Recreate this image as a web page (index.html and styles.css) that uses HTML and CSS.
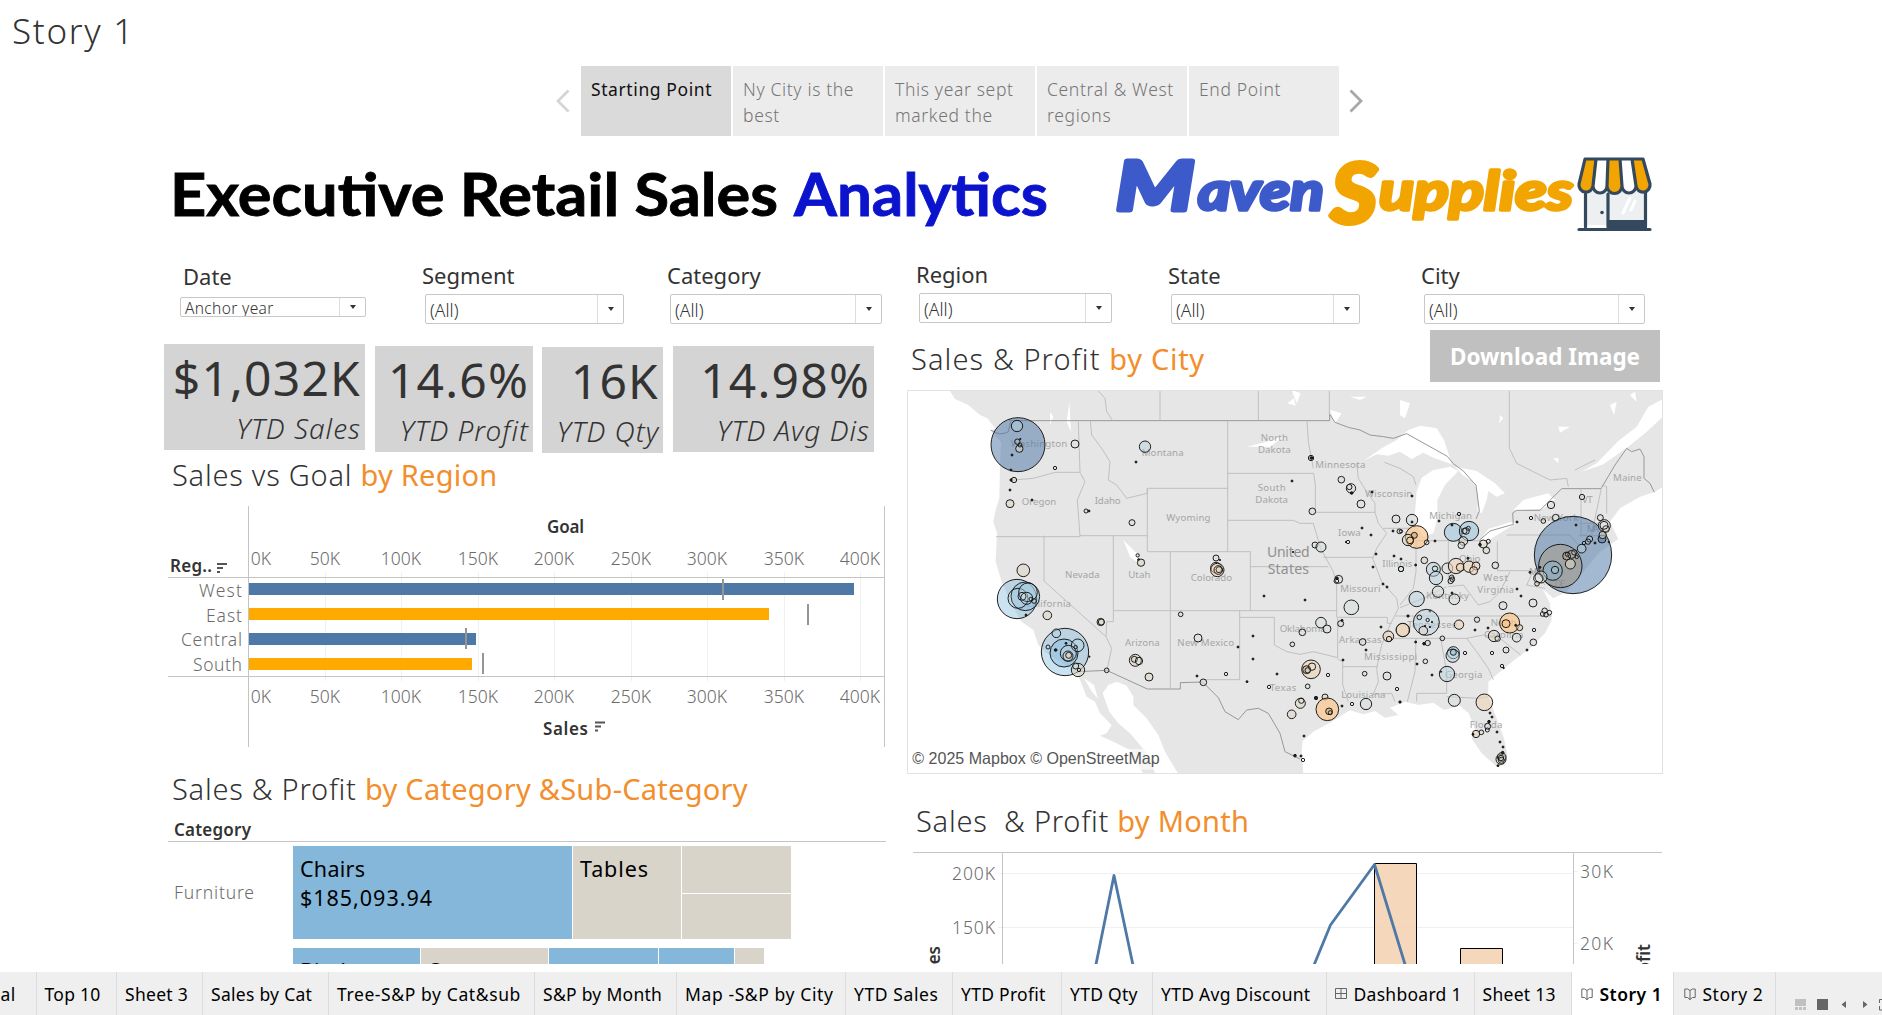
FILE: index.html
```html
<!DOCTYPE html>
<html lang="en">
<head>
<meta charset="utf-8">
<title>Story 1</title>
<link rel="stylesheet" href="styles.css">
</head>
<body>
<h1 class="story-title">Story 1</h1>
<nav class="story-nav">
  <svg class="chev" width="14" height="24" viewBox="0 0 14 24"><path d="M12.500 1.500 2 12l10.500 10.500"/></svg>
  <div class="points">
    <div class="point active">Starting Point</div>
    <div class="point">Ny City is the best</div>
    <div class="point">This year sept marked the</div>
    <div class="point">Central &amp; West regions</div>
    <div class="point">End Point</div>
  </div>
  <svg class="chev next" width="14" height="24" viewBox="0 0 14 24"><path d="M1.500 1.500 12 12 1.500 22.500"/></svg>
</nav>

<main class="dashboard">
  <header class="banner">
    <svg class="title" width="900" height="119" viewBox="164 136 900 119">
      <text x="170" y="216" textLength="608" lengthAdjust="spacingAndGlyphs">Executive Retail Sales</text>
      <text class="blue" x="794" y="216" textLength="254" lengthAdjust="spacingAndGlyphs">Analytics</text>
    </svg>
    <svg class="logo" width="560" height="119" viewBox="1100 136 560 119">
      <g class="brand maven">
        <text class="cap" x="1116" y="210" textLength="78" lengthAdjust="spacingAndGlyphs">M</text>
        <text x="1198" y="210" textLength="126" lengthAdjust="spacingAndGlyphs">aven</text>
      </g>
      <g class="brand supplies">
        <text class="cap big" x="1331" y="223" textLength="46" lengthAdjust="spacingAndGlyphs">S</text>
        <text x="1379" y="210" textLength="194" lengthAdjust="spacingAndGlyphs">upplies</text>
      </g>
      <path d="M1585 188h62v37h-62z" fill="#ecf0f1"/>
      <path d="M1608 220h39v8h-39z" fill="#34495e"/>
      <path d="M1585.500 194v33M1608 194v33M1645.500 188v38M1579 229.500h71" fill="none" stroke="#34495e" stroke-width="3.200" stroke-linecap="round"/>
      <circle cx="1602" cy="212.500" r="1.800" fill="#34495e"/>
      <path d="M1630 198l-7 15M1635 201l-4 9" stroke="#fff" stroke-width="3" stroke-linecap="round"/>
      <path d="M1585 159h58l7 25a6.500 6.500 0 0 1-14 2 7 7 0 0 1-14 0 7 7 0 0 1-15 0 7 7 0 0 1-14 0 6.500 6.500 0 0 1-14-2z" fill="#fff"/>
      <path d="M1585 159h11l-3 27a7 7 0 0 1-14-2zM1608 159h12l2 26a7 7 0 0 1-15 0zM1632 159h11l7 25a7 7 0 0 1-14 2z" fill="#f2a500"/>
      <path d="M1585 159h58l7 25a6.500 6.500 0 0 1-14 2 7 7 0 0 1-14 0 7 7 0 0 1-15 0 7 7 0 0 1-14 0 6.500 6.500 0 0 1-14-2zM1596 159l-3 27M1608 159l-1 27M1620 159l2 27M1632 159l4 27" fill="none" stroke="#34495e" stroke-width="3.200" stroke-linejoin="round"/>
    </svg>
  </header>

  <div class="columns">
    <section class="left">
      <div class="filters">
        <div class="filter date"><label>Date</label><div class="select small"><span>Anchor year</span><i></i></div></div>
        <div class="filter seg"><label>Segment</label><div class="select"><span>(All)</span><i></i></div></div>
        <div class="filter cat"><label>Category</label><div class="select"><span>(All)</span><i></i></div></div>
      </div>
      <div class="kpis">
        <div class="kpi k1"><b>$1,032K</b><em>YTD Sales</em></div>
        <div class="kpi k2"><b>14.6%</b><em>YTD Profit</em></div>
        <div class="kpi k3"><b>16K</b><em>YTD Qty</em></div>
        <div class="kpi k4"><b>14.98%</b><em>YTD Avg Dis</em></div>
      </div>
      <h2 class="h-region">Sales vs Goal <span>by Region</span></h2>
      <svg class="chart" width="723" height="260" viewBox="164 495 723 260">
        <path class="grid" d="M325.500 572v109M401.500 572v109M478.500 572v109M554.500 572v109M631.500 572v109M707.500 572v109M784.500 572v109M860.500 572v109"/>
        <g class="tick">
          <g id="axisTop" text-anchor="middle">
            <text x="261" y="565">0K</text><text x="325" y="565">50K</text><text x="401" y="565">100K</text><text x="478" y="565">150K</text><text x="554" y="565">200K</text><text x="631" y="565">250K</text><text x="707" y="565">300K</text><text x="784" y="565">350K</text><text x="860" y="565">400K</text>
          </g>
          <use href="#axisTop" y="138"/>
          <g text-anchor="end">
            <text x="242" y="597" textLength="43">West</text><text x="242" y="622" textLength="36">East</text><text x="242" y="646" textLength="61">Central</text><text x="242" y="671" textLength="49">South</text>
          </g>
        </g>
        <path class="axis" d="M248.500 506v241M884.500 506v241M168 577.500h717M168 676.500h717"/>
        <g fill="#4e79a7"><rect x="249" y="583" width="605" height="12"/><rect x="249" y="633" width="227" height="12"/></g>
        <g fill="#ffaa00"><rect x="249" y="608" width="520" height="12"/><rect x="249" y="658" width="223" height="12"/></g>
        <path d="M723 579v21M808 604v21M466 628v21M483 653v21" stroke="#959595" stroke-width="2"/>
        <g class="bold"><text x="547" y="533" textLength="37">Goal</text><text x="543" y="735" textLength="45">Sales</text><text x="170" y="572" textLength="42">Reg..</text></g>
        <path d="M217 564h10M217 568h6M217 572h3M595 722.500h10M595 726.500h6M595 730.500h3" stroke="#555" stroke-width="1.800"/>
      </svg>
      <h2 class="h-cat">Sales &amp; Profit <span>by Category &amp;Sub-Category</span></h2>
      <svg class="chart" width="723" height="154" viewBox="164 810 723 154">
        <g class="bold"><text x="174" y="836" textLength="77">Category</text></g>
        <path class="axis" d="M168 841.500h718"/>
        <g class="tick"><text x="174" y="899" textLength="80">Furniture</text></g>
        <g fill="#84b7d9"><path d="M293 846h279v93H293zM293 948h127v20H293zM549 948h109v20H549zM659 948h75v20h-75z"/></g>
        <g fill="#d8d4c9"><path d="M573 846h108v93H573zM682 846h109v47H682zM682 894h109v45H682zM421 948h127v20H421zM735 948h29v20h-29z"/></g>
        <g class="mark"><text x="300" y="877" textLength="65">Chairs</text><text x="300" y="906" textLength="132">$185,093.94</text><text x="580" y="877" textLength="68">Tables</text><text x="300" y="979">Binders</text><text x="429" y="979">Storage</text></g>
      </svg>
    </section>

    <section class="right">
      <div class="filters">
        <div class="filter reg"><label>Region</label><div class="select"><span>(All)</span><i></i></div></div>
        <div class="filter sta"><label>State</label><div class="select"><span>(All)</span><i></i></div></div>
        <div class="filter cit"><label>City</label><div class="select"><span>(All)</span><i></i></div></div>
      </div>
      <div class="map-head">
        <h2 class="h-city">Sales &amp; Profit <span>by City</span></h2>
        <button class="download">Download Image</button>
      </div>
      <svg class="map" width="756" height="384" viewBox="21 15 2268 1152">
        <rect x="21" y="15" width="2268" height="1152" fill="#e6e6e6"/>
        <!-- oceans -->
        <g fill="#fff">
          <path d="M21 15H148L165 42 205 60 240 90 262 100 285 130 272 137 303 172 300 240 298 340 288 370 280 410 291 445 287 530 305 590 335 660 365 710 400 735 415 780 435 800 480 830 510 850 535 872 560 935 585 950 600 985 635 1020 620 1045 600 1052 640 1070 690 1095 730 1167H21z"/>
          <path d="M608 925 625 900 650 890 680 902 700 935 700 960 740 1000 775 1050 795 1100 835 1167H765L752 1120 720 1080 690 1045 655 1015 628 980z"/>
          <path d="M552 880l30 20 12 42-22-28z"/>
          <path d="M1210 1167 1205 1100 1208 1068 1240 1040 1295 1010 1330 988 1350 976 1390 988 1425 978 1455 998 1495 990 1470 968 1515 950 1555 960 1600 953 1632 975 1680 962 1706 985 1728 1040 1715 1060 1745 1105 1790 1145 1812 1140 1822 1110 1812 1060 1790 1000 1765 935 1765 890 1800 860 1850 820 1890 790 1935 745 1955 705 1950 655 1928 612 1960 640 2000 620 2100 500 2155 462 2130 410 2160 370 2220 335 2265 320 2289 305V1167z"/>
          <path d="M2289 42 2245 65 2210 125 2155 168 2090 235 2045 260 2110 238 2185 185 2235 145 2289 95z"/>
        </g>
        <!-- lakes -->
        <g fill="#fff">
          <path d="M1390 228 1445 190 1490 165 1525 135 1560 122 1610 130 1632 165 1645 205 1655 238 1600 218 1570 203 1535 222 1500 200 1465 212 1430 208z"/>
          <path d="M1545 385 1550 320 1565 278 1600 255 1650 245 1675 258 1635 300 1612 345 1612 400 1600 445 1570 455 1548 420z"/>
          <path d="M1665 245 1730 258 1785 295 1815 325 1790 335 1765 318 1760 345 1745 385 1732 378 1735 330 1722 292 1690 272z"/>
          <path d="M1735 472 1765 432 1830 412 1850 414 1795 448 1745 480z"/>
          <path d="M1840 376 1870 345 1945 325 1965 345 1930 371z"/>
          <path d="M670 465l40 40 5 30-25-20zM1290 75l35 10-20 30zM500 110l8-60 5 90zM450 80l10 15-10 25zM1162 55l20-15 5 22zM1175 15l15 40 12-30zM1040 185l60-15 50-15-40 30zM2130 60l20-10-8 40zM2190 30l15-10 5 30zM1975 125l35 0-30 18zM1960 220l15 0 0 15zM1800 90l10 10-12 14zM1350 35l50 0-20 10zM1500 45l30 10-15 45-15-10z"/>
        </g>
        <!-- boundaries -->
        <g class="border">
          <path d="M328 107H1289V88L1305 112 1345 127 1380 135 1410 150 1450 155 1480 160 1520 146 1642 214 1660 236 1690 258 1720 292 1728 300 1738 378 1728 402M1738 466 1770 438 1840 418 1838 384 1850 376H1920L1985 311H2103L2145 240 2180 190 2195 200 2220 192 2232 215V280L2250 295 2263 322"/>
          <path d="M534 860 620 856 742 912H841V893L908 891 955 938 975 980 1015 1004 1040 975 1075 970 1105 985 1140 1045 1155 1100 1200 1122"/>
          <path d="M272 135Q300 155 325 140L332 110"/>
        </g>
        <g class="state">
          <path d="M780 15V107M1075 15V107M1288 15V88M595 18 615 40 620 80 638 107M1828 15V190L1850 235 1900 260 1950 285 2000 280 2005 305M2025 255l60-30"/>
          <path d="M340 285 400 280 465 262H540L535 110M540 262 555 290 532 345 540 455H288M432 452V588L618 755 620 710H640V452H540M571 107 575 150 605 190 630 230 625 285 650 300 680 340 742 325V310H983M742 310V500H1051M640 677H1309M811 500V912M618 755 635 790 620 860M742 452H640M983 107V499M983 406H1180L1200 415 1240 415 1262 490 1300 560 1310 600V697M1051 499V677M1051 545H1285M983 265H1241L1246 300V382H1425M1221 107 1225 170 1240 250M1019 677V884H910M1019 697H1123V780L1160 800 1200 808 1240 800 1313 818V697H1462V715H1475M1313 822 1328 830V845H1432M1328 845V900L1345 950M1425 382 1435 415 1460 445 1430 490 1418 520 1445 590 1490 640 1495 670 1470 720 1445 780 1430 850 1435 890 1420 928 1475 925 1485 950M1370 235 1375 280 1400 320 1425 355 1425 382M1270 517H1418M1450 430H1530M1453 232 1500 250 1540 275 1548 300"/>
          <path d="M1548 467H1740M1645 467V600M1548 465V560L1540 610 1500 660M1792 470V557H1900L1935 600M1820 450H2010L2035 480M1645 605 1690 600 1735 660 1770 650 1800 620 1830 560M1640 605 1570 640 1500 668M1485 693H1955M1475 760H1700L1750 750 1800 760 1862 810M1622 760 1640 860V925H1550V950M1640 935 1735 940 1765 935M1700 760 1730 800 1765 850 1780 884M1548 760 1545 860 1522 950M2043 311V450L2060 450M2105 305 2085 400 2075 450M2105 300 2120 305V385M2040 415H2100M2035 452H2105M1900 557 1880 600 1935 610"/>
        </g>
        <g class="place">
          <text x="417" y="187" textLength="170">Washington</text><text x="417" y="360" textLength="104">Oregon</text><text x="623" y="356" textLength="78">Idaho</text><text x="547" y="579" textLength="104">Nevada</text><text x="718" y="579" textLength="67">Utah</text><text x="445" y="667" textLength="136">California</text><text x="727" y="783" textLength="104">Arizona</text><text x="788" y="213" textLength="126">Montana</text><text x="1123" y="169" textLength="82">North</text><text x="1123" y="205" textLength="98">Dakota</text><text x="1115" y="318" textLength="84">South</text><text x="1115" y="354" textLength="98">Dakota</text><text x="1321" y="250" textLength="150">Minnesota</text><text x="1466" y="336" textLength="142">Wisconsin</text><text x="865" y="407" textLength="133">Wyoming</text><text x="1348" y="454" textLength="68">Iowa</text><text x="934" y="589" textLength="124">Colorado</text><text x="1492" y="546" textLength="90">Illinois</text><text x="1381" y="622" textLength="121">Missouri</text><text x="1208" y="742" textLength="138">Oklahoma</text><text x="917" y="783" textLength="170">New Mexico</text><text x="1381" y="773" textLength="128">Arkansas</text><text x="1472" y="825" textLength="160">Mississippi</text><text x="1149" y="917" textLength="80">Texas</text><text x="1390" y="938" textLength="133">Louisiana</text><text x="1652" y="402" textLength="128">Michigan</text><text x="1709" y="532" textLength="64">Ohio</text><text x="1787" y="588" textLength="74">West</text><text x="1787" y="624" textLength="110">Virginia</text><text x="1643" y="643" textLength="128">Kentucky</text><text x="1597" y="730" textLength="150">Tennessee</text><text x="1811" y="723" textLength="78">North</text><text x="1811" y="759" textLength="118">Carolina</text><text x="1691" y="880" textLength="112">Georgia</text><text x="1758" y="1029" textLength="98">Florida</text><text x="1968" y="408" textLength="134">New York</text><text x="2062" y="354" textLength="32">VT</text><text x="2078" y="440" textLength="36">MA</text><text x="2182" y="287" textLength="86">Maine</text><text x="1980" y="605" textLength="32">DE</text><text x="1905" y="570" textLength="36">MD</text>
        </g>
        <g class="country"><text x="1165" y="516" textLength="128">United</text><text x="1165" y="566" textLength="124">States</text></g>
        <g id="cities"></g>
        <rect x="30" y="1092" width="758" height="62" fill="#fff" opacity=".6"/>
        <text class="credit" x="37" y="1138" textLength="742" lengthAdjust="spacingAndGlyphs">© 2025 Mapbox © OpenStreetMap</text>
        <rect x="22.500" y="16.500" width="2265" height="1149" fill="none" stroke="#e2e2e2" stroke-width="3"/>
      </svg>
      <h2 class="h-month">Sales &nbsp;&amp; Profit <span>by Month</span></h2>
      <svg class="chart" width="755" height="123" viewBox="907 841 755 123">
        <path class="grid" d="M998 873.500h575M998 927.500h575M1574 871.500h4M1574 943.500h4"/>
        <path class="axis" d="M913 852.500h749M1002.500 852v120M1573.500 852v120"/>
        <g class="tick"><text x="952" y="880" textLength="43">200K</text><text x="952" y="934" textLength="43">150K</text><text x="1580" y="878" textLength="33">30K</text><text x="1580" y="950" textLength="33">20K</text></g>
        <path d="M1374.500 863.500h42V980h-42zM1460.500 948.500h42V980h-42z" fill="#f3d0b0" fill-opacity=".85" stroke="#000"/>
        <path d="M1092 984 1114 875.500 1137 984M1307 982 1330.500 925 1374.500 864.500 1411 984" fill="none" stroke="#4e79a7" stroke-width="2.800" stroke-linejoin="round"/>
        <g class="bold" text-anchor="end"><text transform="translate(939.500 946) rotate(-90)">Sales</text><text transform="translate(1649.500 944) rotate(-90)">Profit</text></g>
      </svg>
    </section>
  </div>
</main>

<footer class="tabs">
  <div class="tab first">Goal</div><div class="tab">Top 10</div><div class="tab">Sheet 3</div><div class="tab">Sales by Cat</div><div class="tab wide">Tree-S&amp;P by Cat&amp;sub</div><div class="tab">S&amp;P by Month</div><div class="tab wide">Map -S&amp;P by City</div><div class="tab wide">YTD Sales</div><div class="tab">YTD Profit</div><div class="tab">YTD Qty</div><div class="tab">YTD Avg Discount</div>
  <div class="tab"><svg width="12" height="12" viewBox="0 0 12 12"><path d="M.5.5h11v10H.5zM6 .5v10M.5 5.500h11"/></svg>Dashboard 1</div>
  <div class="tab">Sheet 13</div>
  <div class="tab current"><svg width="12" height="12" viewBox="0 0 12 12"><path d="M6 2.500V12M.8 1v8.500h2.700L6 11.500l2.500-2h2.700V1H8.500L6 2.500 3.500 1z"/></svg>Story 1</div>
  <div class="tab story"><svg width="12" height="12" viewBox="0 0 12 12"><path d="M6 2.500V12M.8 1v8.500h2.700L6 11.500l2.500-2h2.700V1H8.500L6 2.500 3.500 1z"/></svg>Story 2</div>
  <svg class="controls" width="106" height="43" viewBox="1776 972 106 43">
    <path d="M1795 999h11v7h-11zM1795 1007h3v3h-3zM1799 1007h3v3h-3zM1803 1007h3v3h-3z" fill="#c0c0c0"/>
    <path d="M1817 999h11v11h-11zM1846 1001v7l-4.500-3.500zM1863 1001v7l4.500-3.500z" fill="#666"/>
    <path d="M1879.500 1003v-3.500h3M1879.500 1006v4h3" fill="none" stroke="#666"/>
  </svg>
</footer>
<script src="script.js"></script>
</body>
</html>
```
FILE: styles.css
```css
* { box-sizing: border-box; }
body {
  margin: 0; width: 1882px; height: 1015px; overflow: hidden; background: #fff; color: #333;
  display: flex; flex-direction: column;
  font-family: "Noto Sans", "Open Sans", sans-serif; font-weight: 300;
  font-variant-ligatures: none;
}
svg { display: block; }
.story-title { margin: 0; height: 66px; padding-left: 12px; font-size: 35px; line-height: 62px; font-weight: 350; letter-spacing: 1.7px; }
.story-nav { height: 70px; display: flex; align-items: center; padding-left: 556px; gap: 11px; }
.chev path { fill: none; stroke: #d5d5d5; stroke-width: 2.8; }
.chev.next { margin-left: -1px; }
.chev.next path { stroke: #a8a8a8; }
.points { display: flex; gap: 2px; height: 70px; }
.point { width: 150px; padding: 10px 4px 0 10px; background: #ececec; color: #757575; font-size: 17.5px; line-height: 26px; letter-spacing: .65px; }
.point.active { background: #dadada; color: #111; font-weight: 400; letter-spacing: .6px; }

.dashboard { height: 828px; padding-left: 164px; overflow: hidden; }
.banner { display: flex; gap: 36px; height: 119px; }
.title text { font: 700 60px Lato, sans-serif; font-variant-ligatures: normal; fill: #000; stroke: #000; stroke-width: .9px; }
.title .blue { fill: #0b14cc; stroke: #0b14cc; }
.brand { font: italic 700 53px Lato, sans-serif; stroke-linejoin: round; stroke-width: 3.5px; }
.brand .cap { font-size: 67px; stroke-width: 5px; }
.brand .big { font-size: 82px; }
.maven { fill: #3c5ac9; stroke: #3c5ac9; }
.supplies { fill: #f2a500; stroke: #f2a500; }

.columns { display: flex; }
.left { width: 743px; }
.right { width: 756px; }
.filters { display: flex; }
.left .filters { height: 89px; padding: 6px 0 0 16px; }
.right .filters { height: 75px; padding: 6px 0 0 9px; }
.filter label { display: block; height: 33px; font-size: 22px; line-height: 29px; font-weight: 450; letter-spacing: 0; }
.select { display: flex; height: 30px; margin-left: 3px; border: 1px solid #c8c8c8; border-radius: 2px; font-size: 17.5px; line-height: 30px; }
.select span { flex: 1; padding-left: 4px; }
.select i { width: 26px; border-left: 1px solid #ddd; display: flex; align-items: center; justify-content: center; }
.select i::after { content: ""; border: 3.5px solid transparent; border-top: 4.5px solid #333; border-bottom: 0; }
.date { width: 242px; padding-top: 1px; }
.date label { padding-left: 3px; height: 35px; }
.date .select { margin: 0; width: 186px; }
.select.small { height: 20px; font-size: 15.5px; line-height: 20px; overflow: hidden; letter-spacing: .35px; }
.seg { width: 245px; }
.seg .select { width: 199px; }
.cat .select { width: 212px; }
.reg { width: 252px; margin-top: -1px; }
.reg .select { width: 193px; }
.sta { width: 253px; }
.sta .select { width: 189px; margin-left: 3px; }
.cit .select { width: 221px; margin-left: 3px; }

.kpis { display: flex; height: 111px; align-items: flex-start; }
.kpi { height: 106px; padding: 4px 5px 0 0; background: #d4d4d4; display: flex; flex-direction: column; align-items: flex-end; white-space: nowrap; }
.kpi b { font-size: 48px; line-height: 60px; font-weight: 400; letter-spacing: 1.2px; margin-right: -1px; }
.kpi em { font-size: 28px; line-height: 41px; letter-spacing: 1px; margin-right: -1px; }
.k1 { width: 201px; }
.k2 { width: 158px; margin: 2px 0 0 10px; }
.k3 { width: 121px; margin: 3px 0 0 9px; }
.k4 { width: 201px; margin: 2px 0 0 10px; }

h2 { margin: 0; height: 40px; line-height: 40px; font-size: 29px; font-weight: 300; letter-spacing: .75px; white-space: nowrap; }
h2 span { color: #f28e2b; font-weight: 450; letter-spacing: .25px; }
.h-region { padding-left: 8px; }
.h-cat { margin-top: 14px; margin-bottom: 1px; padding-left: 8px; }
.h-city { padding-left: 4px; margin-top: 9px; letter-spacing: 1.1px; }
.h-city span { letter-spacing: .7px; }
.h-month { margin-top: 27px; padding-left: 9px; }
.map-head { height: 60px; display: flex; justify-content: space-between; padding-right: 3px; }
.download { width: 230px; height: 52px; border: 0; padding: 0; background: #c0c0c0; color: #fff; font: 700 22.5px "Noto Sans", sans-serif; }

.grid { stroke: #f0f0f0; fill: none; }
.axis { stroke: #c4c4c4; fill: none; }
.tick { font-size: 17.5px; fill: #6b6b6b; }
.bold { font-size: 17px; font-weight: 600; fill: #333; }
.mark { font-size: 21.5px; font-weight: 450; fill: #000; }

.border { fill: none; stroke: #989898; stroke-width: 3; stroke-linejoin: round; }
.state { fill: none; stroke: #b9b9b9; stroke-width: 2.6; stroke-linejoin: round; }
.place { font-size: 29px; font-weight: 400; fill: #a5a5a5; text-anchor: middle; }
.country { font-size: 42px; font-weight: 400; fill: #8f8f8f; text-anchor: middle; }
.credit { font: 400 47px "Liberation Sans", Arial, sans-serif; fill: #555; }
#cities circle { stroke: #111; stroke-width: 2.8; }

.tabs { height: 43px; margin-top: 8px; background: #efefef; display: grid; grid-template-columns: 36.500px 80.500px 86px 126px 206px 142px 169px 107px 109px 91px 173.500px 148px 97px 102px 102px 106px; }
.tab { display: flex; align-items: center; padding: 0 0 0 8px; border-right: 1px solid #dcdcdc; color: #000; font-size: 17.5px; white-space: nowrap; font-weight: 370; letter-spacing: .28px; overflow: hidden; }
.tab.wide { letter-spacing: .6px; }
.tab svg { margin-right: 7px; flex: none; }
.tab svg path { fill: none; stroke: #666; }
.tab.first { justify-content: flex-end; padding: 0 20px 0 0; }
.tab.current { background: #fff; font-weight: 600; padding-left: 9px; letter-spacing: .5px; }
.tab.story { padding-left: 10px; letter-spacing: .5px; }
```
FILE: script.js
```javascript
// City marks: [x, y, radius, colour key] on the map's canvas, grouped by longitude band.
const fills = { b: ["#4e79a7", .52], l: ["#84bbde", .42], c: ["#b4d2df", .45], g: ["#d8e0da", .5], t: ["#dcd5c5", .55], p: ["#ecd3b8", .6], o: ["#fcc68c", .7], n: ["#b09572", .4], d: ["#222222", 1], w: ["#ffffff", .1] };
const bands = [
  [0, [
    [354,179,81,"b"],[351,123,17,"c"],[352,170,8,"w"],[358,191,11,"t"],[360,180,6,"w"],[361,162,2,"d"],[336,210,3,"d"],[333,255,3,"d"],[525,177,12,"g"],[465,249,5,"g"],[735,185,17,"c"],[708,231,3,"d"],[334,285,4,"d"],[342,285,8,"t"],[330,315,3,"d"],[330,356,12,"t"],[396,345,3,"d"],[558,378,6,"g"],[567,378,3,"d"],[696,413,9,"g"],
    [370,556,19,"t"],[351,642,59,"l"],[376,634,43,"l"],[354,640,30,"w"],[384,622,28,"c"],[366,634,12,"w"],[380,640,18,"w"],[402,648,7,"w"],[392,642,5,"w"],[378,690,3,"d"],[442,691,13,"t"],[495,801,71,"l"],[492,804,42,"l"],[469,745,13,"c"],[533,781,19,"c"],[444,786,6,"w"],[467,795,4,"d"],[505,805,24,"w"],[504,813,15,"t"],[506,811,9,"t"],[498,775,3,"d"],[527,786,5,"w"],[534,855,20,"t"],[527,843,9,"g"],[537,855,5,"w"],[568,815,2,"d"],
    [713,511,5,"g"],[716,524,3,"d"],[723,533,11,"t"],[602,711,11,"g"],[604,711,9,"t"],[620,856,7,"g"],[706,826,18,"t"],[703,823,9,"t"],[717,828,11,"w"],[747,876,12,"t"]]],
  [750, [
    [483,219,8,"g"],[484,219,4,"d"],[426,288,3,"d"],[574,284,10,"g"],[603,310,14,"g"],[598,306,8,"g"],[605,324,4,"d"],[633,357,12,"g"],[666,321,3,"d"],[487,379,10,"g"],[738,402,12,"g"],[729,438,3,"d"],[748,439,7,"g"],[636,429,3,"d"],[663,450,3,"d"],[594,471,5,"w"],[588,471,2,"d"],[495,480,9,"g"],[513,486,15,"g"],[429,501,2,"d"],[678,507,3,"d"],[669,546,3,"d"],[732,513,3,"d"],[753,522,3,"d"],[753,552,8,"g"],[198,519,9,"g"],[210,525,2,"d"],[198,548,16,"p"],[202,555,20,"p"],[207,554,9,"t"],[205,555,13,"w"],
    [342,633,3,"d"],[465,645,3,"d"],[566,583,12,"g"],[559,588,7,"w"],[561,580,4,"d"],[699,597,3,"d"],[711,606,3,"d"],[604,667,22,"g"],[92,688,7,"g"],[144,759,12,"g"],[264,786,3,"d"],[309,753,3,"d"],[309,822,3,"d"],[381,867,3,"d"],[291,890,3,"d"],[228,867,5,"w"],[141,873,3,"d"],[160,892,10,"g"],[513,713,16,"g"],[531,732,12,"g"],[457,742,10,"g"],[427,778,7,"g"],[572,716,9,"t"],[576,706,3,"d"],[693,726,3,"d"],[774,693,3,"d"],[638,771,10,"g"],[648,795,3,"d"],[715,754,16,"p"],[717,762,8,"t"],[759,735,20,"p"],
    [483,853,28,"p"],[470,854,12,"n"],[486,845,11,"w"],[473,856,8,"t"],[534,870,5,"w"],[579,825,3,"d"],[644,866,7,"g"],[711,873,12,"g"],[741,912,5,"w"],[750,951,3,"d"],[648,957,17,"g"],[606,957,5,"w"],[576,963,3,"d"],[357,906,5,"w"],[473,904,7,"g"],[525,936,9,"t"],[498,939,5,"d"],[451,955,15,"t"],[454,947,8,"w"],[425,988,13,"t"],[532,973,34,"o"],[537,979,10,"n"],[541,983,6,"w"],[462,1053,3,"d"],[435,1112,4,"d"],[453,1113,3,"d"],[459,1125,5,"w"]]],
  [1500, [
    [36,333,3,"d"],[36,405,17,"g"],[36,411,3,"d"],[50,456,34,"o"],[24,465,17,"t"],[30,466,10,"o"],[43,451,9,"n"],[80,472,7,"w"],[3,439,5,"w"],[105,468,3,"d"],[117,408,3,"d"],[177,387,5,"w"],[160,442,27,"l"],[207,438,29,"l"],[156,420,3,"d"],[193,438,8,"t"],[198,438,10,"w"],[205,430,6,"w"],[190,468,13,"t"],[184,481,10,"g"],[250,477,12,"t"],[265,469,6,"w"],[259,496,10,"t"],[240,479,4,"d"],[351,411,3,"d"],[393,399,5,"w"],[430,408,7,"g"],
    [73,526,10,"t"],[47,540,3,"d"],[3,552,8,"g"],[100,553,21,"c"],[105,551,8,"g"],[108,579,20,"c"],[142,550,16,"g"],[168,543,23,"p"],[181,547,12,"p"],[207,545,17,"p"],[228,543,12,"p"],[221,557,12,"p"],[204,520,3,"d"],[286,541,10,"g"],[155,577,7,"g"],[152,588,8,"g"],[157,583,7,"w"],[114,620,17,"g"],[50,642,23,"c"],[163,643,16,"g"],[156,624,3,"d"],[351,612,3,"d"],[363,633,3,"d"],[399,654,12,"g"],[309,662,12,"g"],[24,693,3,"d"],[90,678,3,"d"],[79,712,39,"c"],[58,697,7,"w"],[83,705,5,"w"],[70,737,13,"t"],[96,711,2,"d"],[90,726,2,"d"],[75,723,2,"d"],[8,735,20,"p"],[127,760,7,"g"],[83,774,8,"t"],[72,776,4,"d"],[47,771,3,"d"],[177,719,14,"p"],[231,704,8,"g"],[225,735,3,"d"],[264,729,3,"d"],
    [329,714,30,"o"],[318,716,12,"o"],[347,721,3,"d"],[359,728,9,"p"],[282,753,17,"t"],[293,761,8,"g"],[350,758,13,"g"],[402,735,5,"w"],[400,772,10,"g"],[381,795,3,"d"],[318,795,9,"g"],[276,804,5,"w"],[195,804,5,"w"],[306,843,5,"g"],[311,849,2,"d"],[160,803,18,"c"],[158,812,20,"c"],[160,802,9,"l"],[76,829,7,"g"],[51,837,3,"d"],[96,870,3,"d"],[141,867,23,"c"],[123,860,2,"d"],[163,946,18,"g"],[253,952,25,"p"],[0,951,3,"d"],[428,687,7,"g"],[434,677,8,"g"],[448,683,7,"w"],[438,689,7,"w"],
    [270,984,3,"d"],[276,996,3,"d"],[267,1010,4,"d"],[263,1024,9,"g"],[262,1035,6,"w"],[244,1042,7,"g"],[228,1047,11,"p"],[219,1048,3,"d"],[291,1041,3,"d"],[300,1071,3,"d"],[309,1086,3,"d"],[303,1123,15,"g"],[305,1116,13,"g"],[303,1119,8,"n"],[308,1103,4,"d"],[304,1126,9,"w"],[294,1142,3,"d"],
    [453,360,11,"g"],[467,398,10,"g"],[546,336,8,"g"],[601,398,9,"g"],[519,510,116,"b"],[528,420,3,"d"],[481,543,65,"n"],[458,557,29,"l"],[465,555,11,"w"],[423,576,18,"g"],[415,580,14,"w"],[411,596,7,"t"],[390,562,3,"d"],[420,547,3,"d"],[511,537,15,"t"],[500,513,12,"n"],[515,508,12,"w"],[523,502,8,"w"],[530,516,5,"w"],[502,508,6,"w"],[545,491,13,"c"],[552,474,5,"w"],[569,462,9,"c"],[564,470,8,"w"],[585,474,3,"d"],[606,462,12,"b"],[608,450,11,"t"],[613,422,18,"g"],[618,432,10,"t"],[612,421,12,"w"],[626,471,2,"d"]]]
];
const layer = document.getElementById("cities");
for (const [dx, cities] of bands) {
  for (const [x, y, r, key] of cities) {
    const c = document.createElementNS("http://www.w3.org/2000/svg", "circle");
    c.setAttribute("cx", x + dx);
    c.setAttribute("cy", y);
    c.setAttribute("r", r);
    c.setAttribute("fill", fills[key][0]);
    c.setAttribute("fill-opacity", fills[key][1]);
    layer.appendChild(c);
  }
}
```
